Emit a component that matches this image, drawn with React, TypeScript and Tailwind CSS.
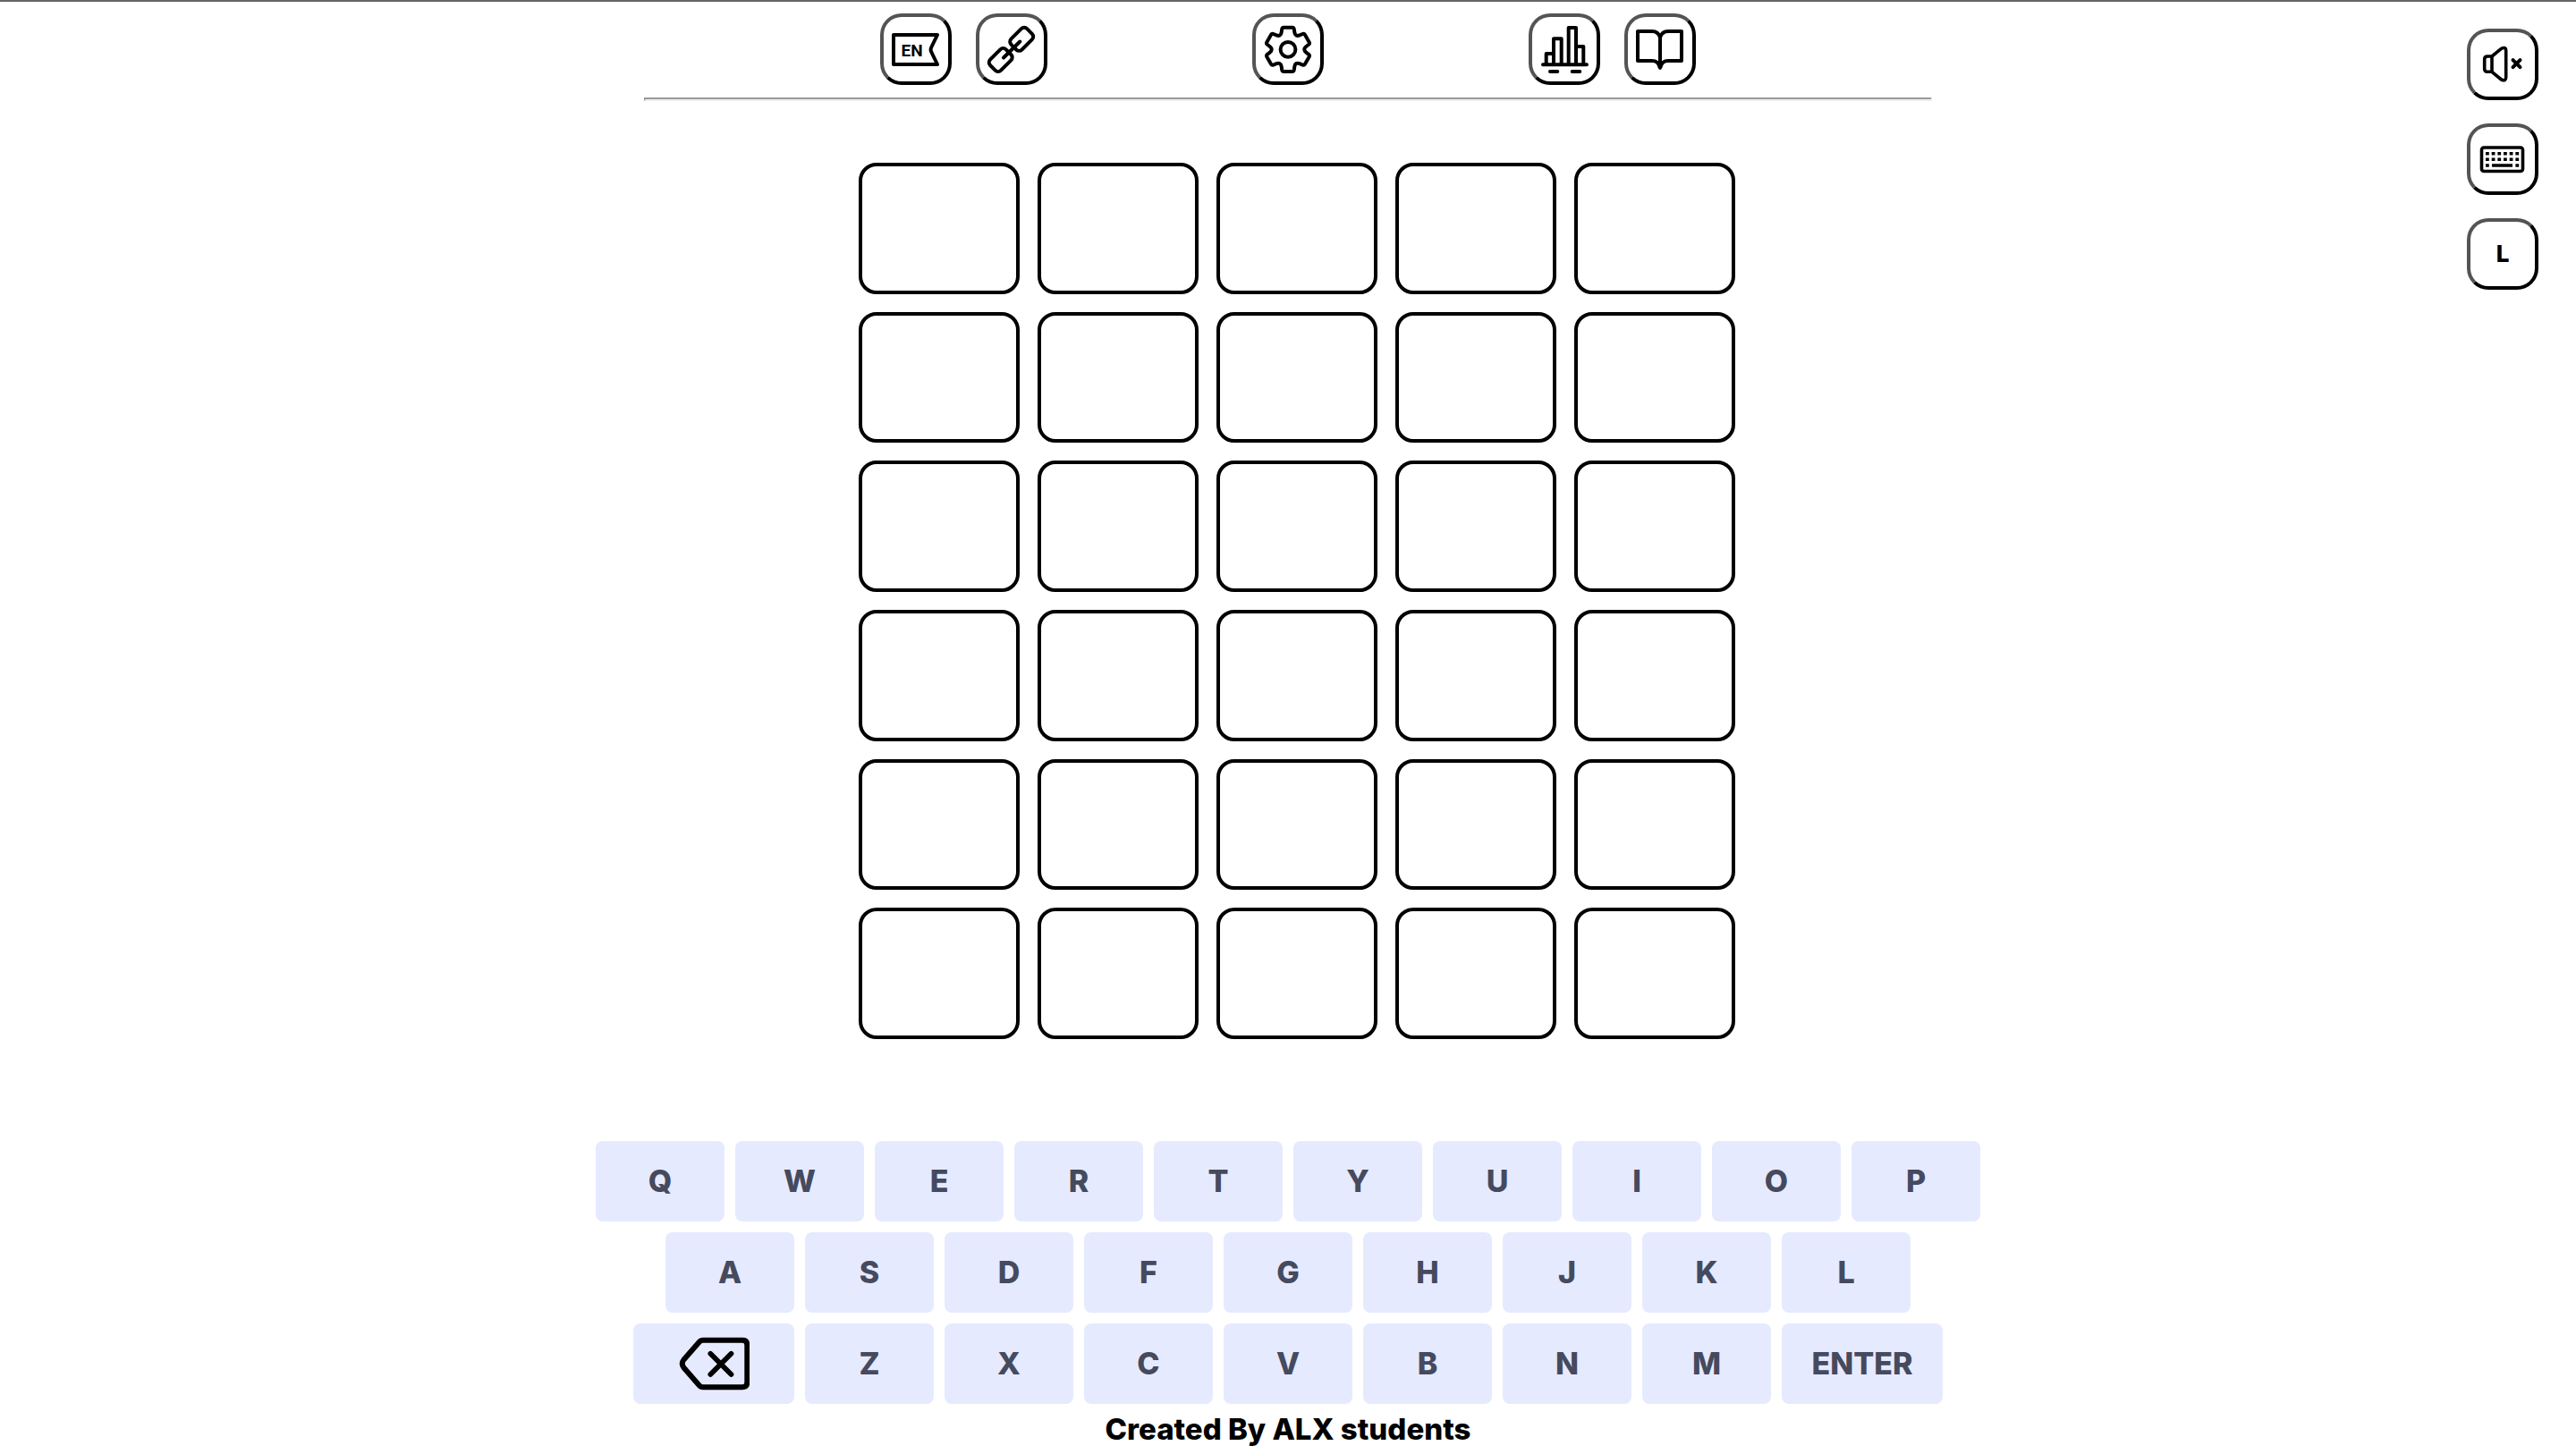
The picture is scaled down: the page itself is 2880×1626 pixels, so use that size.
import type { ReactNode } from "react";

const buttonClass =
  "flex size-20 shrink-0 items-center justify-center rounded-3xl border-4 border-black bg-white p-0 text-[26px] leading-none font-extrabold text-black [border-style:outset]";

function Icon({ children }: { children: ReactNode }) {
  return (
    <svg
      viewBox="4 4 72 72"
      className="size-[72px]"
      fill="none"
      stroke="#000"
      strokeWidth={4}
      strokeLinecap="round"
      strokeLinejoin="round"
      aria-hidden="true"
    >
      {children}
    </svg>
  );
}

function IconButton({ label, children }: { label: string; children: ReactNode }) {
  return (
    <button type="button" aria-label={label} className={buttonClass}>
      {children}
    </button>
  );
}

function LanguageIcon() {
  return (
    <Icon>
      <path d="M15 24H64L57.2 38Q56 40.5 57.2 43L64 57H15Z" />
      <text
        x="35.5"
        y="47.5"
        textAnchor="middle"
        fill="#000"
        stroke="none"
        className="font-['Roboto',sans-serif] text-[19px] font-bold"
      >
        EN
      </text>
    </Icon>
  );
}

function LinkIcon() {
  return (
    <Icon>
      <rect x="38.7" y="20.3" width="25" height="17" rx="4.5" transform="rotate(-45 51.2 28.8)" />
      <rect x="15.2" y="43.5" width="25" height="17" rx="4.5" transform="rotate(-45 27.7 52)" />
      <path d="M31 49.5L49.3 31.5" />
    </Icon>
  );
}

function GearIcon() {
  // One tooth and the valley after it, repeated six times round the centre.
  const tooth = [
    [-4.8, -24.6], [4.8, -24.6], [6.4, -24.6], [6.8, -22.8], [7.3, -19.2],
    [7.8, -15.8], [9.78, -14.65], [12.98, -15.92],
  ];
  const point = (x: number, y: number, angle: number) =>
    `${(40 + x * Math.cos(angle) - y * Math.sin(angle)).toFixed(2)} ${(40.3 + x * Math.sin(angle) + y * Math.cos(angle)).toFixed(2)}`;
  const parts: string[] = [];
  for (let i = 0; i < 6; i++) {
    const a = (i * Math.PI) / 3;
    const b = a + Math.PI / 3;
    const p = tooth.map(([x, y]) => point(x, y, a));
    parts.push(
      `${i === 0 ? "M" + p[0] : ""}L${p[1]}Q${p[2]} ${p[3]}L${p[4]}C${p[5]} ${p[6]} ${p[7]}L${point(-6.8, -22.8, b)}Q${point(-6.4, -24.6, b)} ${point(-4.8, -24.6, b)}`,
    );
  }
  return (
    <Icon>
      <path d={parts.join("") + "Z"} />
      <circle cx="40" cy="40.3" r="8.4" />
    </Icon>
  );
}

function StatsIcon() {
  return (
    <Icon>
      <path d="M16 57.3H65M24 65H32.3M48.7 65H57.3" />
      <path d="M19.7 57V45H28M28 57V28.3H36.7V57M44.7 57V16H53V57M53 37H61.3V57" />
    </Icon>
  );
}

function BookIcon() {
  return (
    <Icon>
      <path d="M40 27Q38 20 31 20H15V53H31Q38 53 39.5 60M40 27Q42 20 49 20H64V53H49Q42 53 40.5 60M40 26V61" />
    </Icon>
  );
}

function MuteIcon() {
  return (
    <Icon>
      <path
        d="M28 31H23Q19.7 31 19.7 34.3V45Q19.7 48.3 23 48.3H28ZM28 31L38.5 22.3Q43.7 20 43.7 24.5V54.5Q43.7 59.3 38.5 57L28 48.3"
        strokeWidth={3.6}
      />
      <path d="M51.5 35.2L59.5 43.2M59.5 35.2L51.5 43.2" />
    </Icon>
  );
}

function KeyboardIcon() {
  return (
    <Icon>
      <rect x="16.5" y="27" width="46" height="26.5" rx="2.5" strokeWidth={3.6} />
      <path
        d="M21 33.7H59M21 40.3H59"
        strokeWidth={3.6}
        strokeLinecap="butt"
        strokeDasharray="3.8 2.87"
      />
      <path d="M21 47H24.8M28 47H51M54.4 47H58.2" strokeWidth={3.6} strokeLinecap="butt" />
    </Icon>
  );
}

function BackspaceIcon() {
  return (
    <svg
      viewBox="0 0 80 60"
      className="h-[60px] w-20"
      fill="none"
      stroke="#000"
      strokeWidth={6}
      strokeLinecap="round"
      strokeLinejoin="round"
      aria-hidden="true"
    >
      <path d="M28 3.7H72Q77.3 3.7 77.3 9V51Q77.3 56.3 72 56.3H28Q25.5 56.3 23.5 54L6.5 34.5Q3 30 6.5 25.5L23.5 6Q25.5 3.7 28 3.7Z" />
      <path d="M36.3 18.7L59.5 42M59.5 18.7L36.3 42" strokeWidth={5.7} />
    </svg>
  );
}

const rows = [
  ["Q", "W", "E", "R", "T", "Y", "U", "I", "O", "P"],
  ["A", "S", "D", "F", "G", "H", "J", "K", "L"],
  ["BACKSPACE", "Z", "X", "C", "V", "B", "N", "M", "ENTER"],
];

function Key({ name }: { name: string }) {
  const width = name.length > 1 ? "w-[180px]" : "w-36";
  return (
    <button
      type="button"
      aria-label={name}
      className={`${width} flex h-[90px] items-center justify-center rounded-lg bg-[#e6eaff] text-[34px] leading-none font-extrabold text-[#454a5e]`}
    >
      {name === "BACKSPACE" ? <BackspaceIcon /> : name}
    </button>
  );
}

export default function App() {
  return (
    <div className="grid min-h-screen grid-cols-[1fr_auto_1fr] border-t-2 border-[#666] bg-white font-['Inter',sans-serif] text-black">
      <main className="col-start-2 flex flex-col items-center">
        <header className="flex w-[912px] max-w-full justify-between pt-[13px] pb-3.5">
          <div className="flex gap-[27px]">
            <IconButton label="Language"><LanguageIcon /></IconButton>
            <IconButton label="Copy link"><LinkIcon /></IconButton>
          </div>
          <IconButton label="Settings"><GearIcon /></IconButton>
          <div className="flex gap-[27px]">
            <IconButton label="Statistics"><StatsIcon /></IconButton>
            <IconButton label="How to play"><BookIcon /></IconButton>
          </div>
        </header>
        <hr className="w-[50vw] border-2 border-t-[#9a9a9a] border-r-[#eee] border-b-[#eee] border-l-[#9a9a9a]" />

        <section
          aria-label="Board"
          className="mt-[69px] grid h-[980px] w-[1000px] max-w-full grid-cols-5 grid-rows-6 gap-5 pl-5"
        >
          {Array.from({ length: 30 }, (_, i) => (
            <div key={i} className="rounded-[20px] border-4 border-black" />
          ))}
        </section>

        <section aria-label="Keyboard" className="mt-[114px] flex flex-col items-center gap-3">
          {rows.map((row) => (
            <div key={row[0]} className="flex justify-center gap-3">
              {row.map((name) => (
                <Key key={name} name={name} />
              ))}
            </div>
          ))}
        </section>

        <footer className="mt-2 text-[33px] leading-10 font-extrabold">Created By ALX students</footer>
      </main>

      <aside className="mt-[30px] mr-[42px] flex flex-col gap-[26px] justify-self-end">
        <IconButton label="Sound"><MuteIcon /></IconButton>
        <IconButton label="Keyboard"><KeyboardIcon /></IconButton>
        <IconButton label="Layout L">L</IconButton>
      </aside>
    </div>
  );
}
